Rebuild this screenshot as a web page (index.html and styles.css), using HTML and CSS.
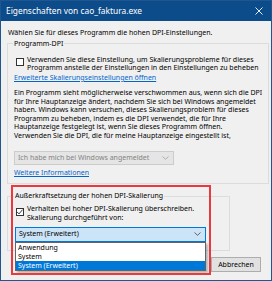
FILE: index.html
```html
<!doctype html>
<html>
 <head>
  <meta charset="utf-8">
  <link rel="stylesheet" href="styles.css">
 </head>
 <body>
  <div class="fenster">
   <div class="titel">
    <span>Eigenschaften von cao_faktura.exe</span>
    <svg class="schliessen" width="8" height="8" viewBox="0 0 8 8"><path d="M0.5 0.5L7.5 7.5M7.5 0.5L0.5 7.5" stroke="#fff" stroke-width="0.9"/></svg>
   </div>
   <div class="inhalt">
    <p class="intro">Wählen Sie für dieses Programm die hohen DPI-Einstellungen.</p>
    <fieldset class="gruppe gruppe-dpi">
     <legend>Programm-DPI</legend>
     <div class="option">
      <span class="kasten"></span>
      <span>Verwenden Sie diese Einstellung, um Skalierungsprobleme für dieses<br>Programm anstelle der Einstellungen in den Einstellungen zu beheben</span>
     </div>
     <a class="link">Erweiterte Skalierungseinstellungen öffnen</a>
     <p class="text">Ein Programm sieht möglicherweise verschwommen aus, wenn sich die DPI<br>für Ihre Hauptanzeige ändert, nachdem Sie sich bei Windows angemeldet<br>haben. Windows kann versuchen, dieses Skalierungsproblem für dieses<br>Programm zu beheben, indem es die DPI verwendet, die für Ihre<br>Hauptanzeige festgelegt ist, wenn Sie dieses Programm öffnen.<br>Verwenden Sie die DPI, die für meine Hauptanzeige eingestellt ist,</p>
     <div class="auswahl gesperrt">
      <span>Ich habe mich bei Windows angemeldet</span>
      <svg width="7" height="4" viewBox="0 0 7 4"><path d="M0.5 0.5L3.5 3.3L6.5 0.5" fill="none" stroke="#a0a0a0" stroke-width="0.8"/></svg>
     </div>
     <a class="link">Weitere Informationen</a>
    </fieldset>
    <fieldset class="gruppe gruppe-override">
     <legend>Außerkraftsetzung der hohen DPI-Skalierung</legend>
     <div class="option">
      <span class="kasten"><svg width="8" height="8" viewBox="0 0 8 8"><path d="M1.2 4L3 5.9L6.6 1.6" fill="none" stroke="#222" stroke-width="0.9"/></svg></span>
      <span>Verhalten bei hoher DPI-Skalierung überschreiben.<br>Skalierung durchgeführt von:</span>
     </div>
     <div class="auswahl aktiv">
      <span>System (Erweitert)</span>
      <svg width="7" height="4" viewBox="0 0 7 4"><path d="M0.5 0.5L3.5 3.3L6.5 0.5" fill="none" stroke="#444" stroke-width="0.8"/></svg>
     </div>
    </fieldset>
    <div class="knoepfe">
     <button class="knopf">Abbrechen</button>
    </div>
   </div>
   <ul class="liste">
    <li>Anwendung</li>
    <li>System</li>
    <li class="gewaehlt">System (Erweitert)</li>
   </ul>
   <div class="markierung"></div>
  </div>
 </body>
</html>
```

FILE: styles.css
```css
body {
    margin: 0;
    background: #fff;
}
.fenster {
    position: relative;
    width: 272px;
    height: 281px;
    box-sizing: border-box;
    border: 1px solid #1f5690;
    background-color: #f0f0f0;
    font-family: "Noto Sans", sans-serif;
    font-size: 7px;
    line-height: 8.6px;
    color: #000;
    white-space: nowrap;
    overflow: hidden;
}
.titel {
    height: 20px;
    display: flex;
    align-items: center;
    justify-content: space-between;
    padding: 0 8px 0 5px;
    background-color: #0d4c8b;
    color: #fff;
    font-size: 8.4px;
}
.schliessen {
    display: block;
}
.inhalt {
    padding: 0 1px 0 6px;
}
.intro {
    margin: 7.7px 0 0 1px;
}
p {
    margin: 0;
}

/* Gruppenrahmen */
.gruppe {
    margin: 0;
    border: 1px solid #dcdcdc;
    padding: 0 0 6px 6px;
    min-width: 0;
}
.gruppe legend {
    padding: 0 1px;
    margin-left: -1px;
}
.gruppe-dpi {
    margin-top: 2.4px;
    width: 262px;
    box-sizing: border-box;
    padding-top: 7.4px;
}
.gruppe-override {
    margin-top: 7.7px;
    width: 223px;
    box-sizing: border-box;
    padding-top: 5px;
    padding-bottom: 8px;
}
.gruppe-override legend {
    margin-left: 0;
}

.option {
    display: flex;
    align-items: flex-start;
    gap: 3px;
}
.kasten {
    flex: none;
    width: 8px;
    height: 8px;
    box-sizing: border-box;
    margin: 2.5px 0 0 2px;
    border: 1px solid #333;
    background: #fff;
    display: flex;
    align-items: center;
    justify-content: center;
}
.kasten svg {
    display: block;
    flex: none;
}
.link {
    display: block;
    width: max-content;
    color: #0066cc;
    text-decoration: underline;
    margin-top: 1.1px;
}
.text {
    margin-top: 6.4px;
}
.auswahl {
    display: flex;
    align-items: center;
    justify-content: space-between;
    box-sizing: border-box;
    padding: 0 4px 0 3px;
}
.auswahl svg {
    display: block;
}
.gesperrt {
    margin-top: 10.4px;
    width: 160px;
    height: 14px;
    background-color: #e5e5e5;
    border: 1px solid #cccccc;
    color: #838383;
}
.gesperrt + .link {
    margin-top: 3.7px;
}
.aktiv {
    margin: 4px 0 0 1px;
    width: 191px;
    height: 15px;
    background-color: #cce4f7;
    border: 1px solid #0078d7;
}

/* Knopfleiste */
.knoepfe {
    display: flex;
    justify-content: flex-end;
    margin: 6px 9px 0 0;
}
.knopf {
    width: 50px;
    height: 15px;
    padding: 0;
    font-family: inherit;
    font-size: 7px;
    color: #000;
    background-color: #e1e1e1;
    border: 1px solid #adadad;
}

/* aufgeklappte Liste */
.liste {
    position: absolute;
    left: 14px;
    top: 241px;
    width: 191px;
    margin: 0;
    padding: 0;
    list-style: none;
    box-sizing: border-box;
    background: #fff;
    border: 1px solid #646464;
    box-shadow: 2px 2px 2px rgba(0, 0, 0, 0.25);
}
.liste li {
    height: 9px;
    line-height: 9px;
    padding-left: 2px;
}
.liste .gewaehlt {
    background-color: #0078d7;
    color: #fff;
}

/* rote Hervorhebung */
.markierung {
    position: absolute;
    left: 10px;
    top: 184px;
    width: 200px;
    height: 90px;
    box-sizing: border-box;
    border: 2px solid #ea3a40;
}
```
